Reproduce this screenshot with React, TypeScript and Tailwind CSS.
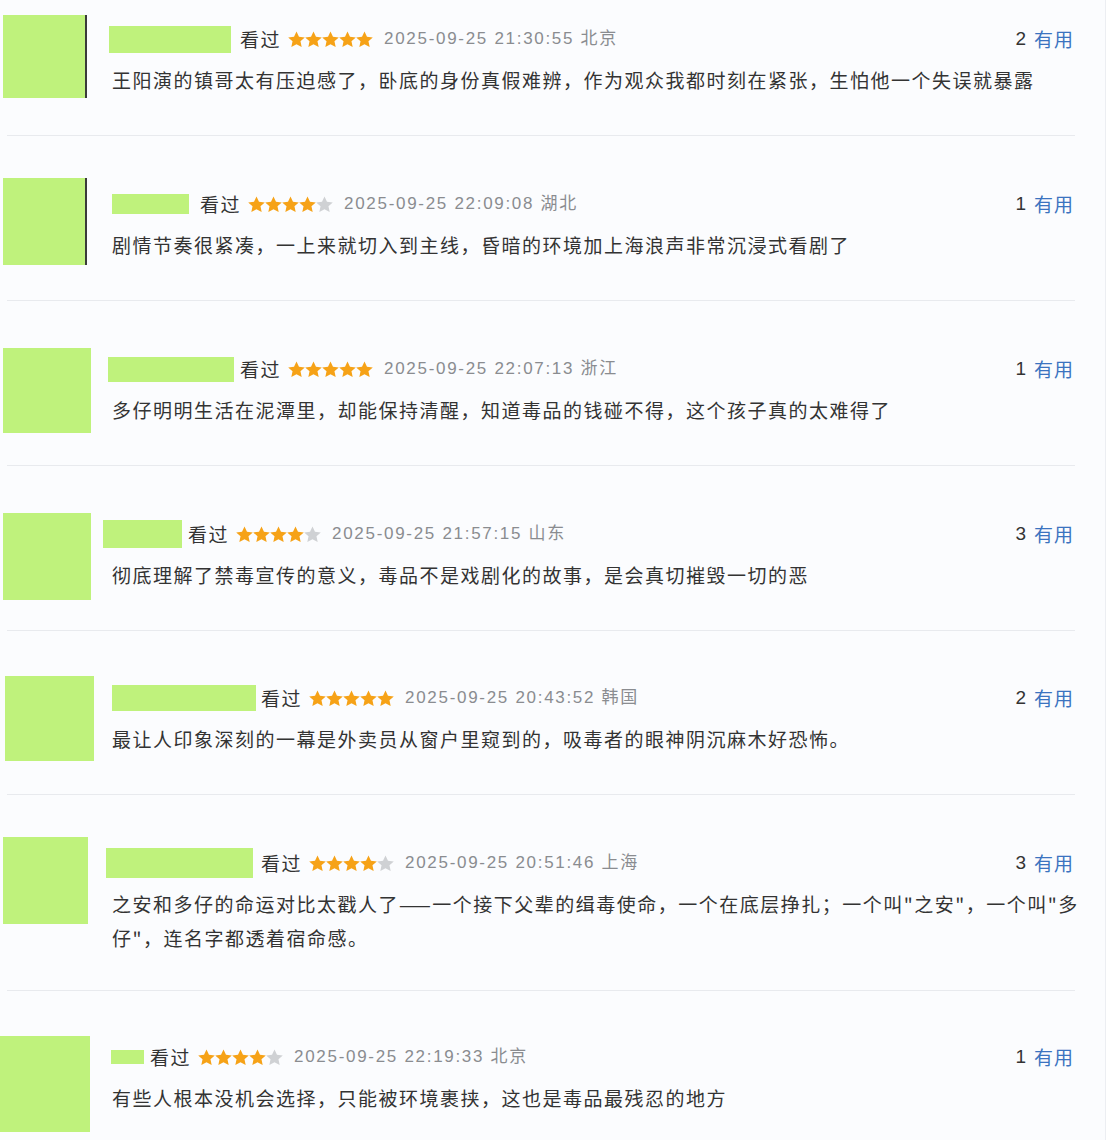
import React from "react";

type Row = {
  pt: string;
  pb: string;
  avatar: string;
  bar: string;
  kan: string;
  stars: number;
  time: string;
  loc: string;
  useful: number;
  lines: string[];
};

const rows: Row[] = [
  {
    pt: "pt-[25px]",
    pb: "pb-[38px]",
    avatar: "mt-[15px] ml-[3px] w-[84px] h-[83px] border-r-2 border-[#3a3a3a]",
    bar: "ml-[9px] w-[122px] h-[27px]",
    kan: "ml-[9px]",
    stars: 5,
    time: "2025-09-25 21:30:55",
    loc: "北京",
    useful: 2,
    lines: ["王阳演的镇哥太有压迫感了，卧底的身份真假难辨，作为观众我都时刻在紧张，生怕他一个失误就暴露"],
  },
  {
    pt: "pt-[54px]",
    pb: "pb-[38px]",
    avatar: "mt-[42px] ml-[3px] w-[84px] h-[87px] border-r-2 border-[#3a3a3a]",
    bar: "ml-[12px] w-[77px] h-[20px]",
    kan: "ml-[11px]",
    stars: 4,
    time: "2025-09-25 22:09:08",
    loc: "湖北",
    useful: 1,
    lines: ["剧情节奏很紧凑，一上来就切入到主线，昏暗的环境加上海浪声非常沉浸式看剧了"],
  },
  {
    pt: "pt-[54px]",
    pb: "pb-[38px]",
    avatar: "mt-[47px] ml-[3px] w-[88px] h-[85px]",
    bar: "ml-[8px] w-[126px] h-[25px]",
    kan: "ml-[6px]",
    stars: 5,
    time: "2025-09-25 22:07:13",
    loc: "浙江",
    useful: 1,
    lines: ["多仔明明生活在泥潭里，却能保持清醒，知道毒品的钱碰不得，这个孩子真的太难得了"],
  },
  {
    pt: "pt-[54px]",
    pb: "pb-[38px]",
    avatar: "mt-[47px] ml-[3px] w-[88px] h-[87px]",
    bar: "ml-[3px] w-[79px] h-[28px]",
    kan: "ml-[6px]",
    stars: 4,
    time: "2025-09-25 21:57:15",
    loc: "山东",
    useful: 3,
    lines: ["彻底理解了禁毒宣传的意义，毒品不是戏剧化的故事，是会真切摧毁一切的恶"],
  },
  {
    pt: "pt-[53px]",
    pb: "pb-[38px]",
    avatar: "mt-[45px] ml-[5px] w-[89px] h-[85px]",
    bar: "ml-[12px] w-[144px] h-[26px]",
    kan: "ml-[5px]",
    stars: 5,
    time: "2025-09-25 20:43:52",
    loc: "韩国",
    useful: 2,
    lines: ["最让人印象深刻的一幕是外卖员从窗户里窥到的，吸毒者的眼神阴沉麻木好恐怖。"],
  },
  {
    pt: "pt-[54px]",
    pb: "pb-[35px]",
    avatar: "mt-[42px] ml-[3px] w-[85px] h-[87px]",
    bar: "ml-[6px] w-[147px] h-[30px]",
    kan: "ml-[8px]",
    stars: 4,
    time: "2025-09-25 20:51:46",
    loc: "上海",
    useful: 3,
    lines: [
      "之安和多仔的命运对比太戳人了——一个接下父辈的缉毒使命，一个在底层挣扎；一个叫\"之安\"，一个叫\"多",
      "仔\"，连名字都透着宿命感。",
    ],
  },
  {
    pt: "pt-[52px]",
    pb: "pb-[20px]",
    avatar: "mt-[45px] ml-0 w-[90px] h-[96px]",
    bar: "ml-[11px] w-[33px] h-[14px]",
    kan: "ml-[6px]",
    stars: 4,
    time: "2025-09-25 22:19:33",
    loc: "北京",
    useful: 1,
    lines: ["有些人根本没机会选择，只能被环境裹挟，这也是毒品最残忍的地方"],
  },
];

const Star = ({ on }: { on: boolean }) => (
  <svg width="17" height="17" viewBox="0 0 24 24" className="shrink-0">
    <path
      d="M12 0.6l3.5 7.5 8.2.9-6.1 5.6 1.7 8.1L12 18.6l-7.3 4.1 1.7-8.1L.3 9l8.2-.9z"
      fill={on ? "#f6a217" : "#cfd1d4"}
    />
  </svg>
);

const cjk = { fontFamily: '"Noto Sans CJK SC", "Noto Sans", sans-serif' };
const mixed = { fontFamily: '"Liberation Sans", "Noto Sans CJK SC", sans-serif' };

export default function App() {
  return (
    <div className="w-[1106px] h-[1140px] overflow-hidden bg-[#fbfcfe] border-r border-[#eceef2]">
      {rows.map((r, i) => (
        <div key={i}>
          {i > 0 && <div className="ml-[7px] w-[1068px] h-px bg-[#e8eaee]" />}
          <div className="flex">
            <div className="w-[100px] shrink-0">
              <div className={`bg-[#bff27c] ${r.avatar}`} />
            </div>
            <div className={`flex-1 min-w-0 pr-[31px] ${r.pt} ${r.pb}`}>
              <div className="flex items-center h-[28px]">
                <div className={`bg-[#bff27c] shrink-0 ${r.bar}`} />
                <span
                  className={`text-[19px] tracking-[1.5px] text-[#333] leading-[28px] ${r.kan}`}
                  style={cjk}
                >
                  看过
                </span>
                <div className="flex ml-[7px]">
                  {[0, 1, 2, 3, 4].map((s) => (
                    <Star key={s} on={s < r.stars} />
                  ))}
                </div>
                <span
                  className="ml-[11px] text-[17px] tracking-[1.7px] text-[#8a8c90] leading-[28px] whitespace-nowrap"
                  style={mixed}
                >
                  {r.time} {r.loc}
                </span>
                <span className="ml-auto flex items-center leading-[28px] whitespace-nowrap">
                  <span className="text-[19px] text-[#333]" style={mixed}>
                    {r.useful}
                  </span>
                  <span
                    className="ml-[8px] text-[19px] tracking-[1px] text-[#3b73c0]"
                    style={cjk}
                  >
                    有用
                  </span>
                </span>
              </div>
              <div
                className="mt-[10px] pl-[12px] text-[19px] tracking-[1.5px] leading-[34px] text-[#333] whitespace-nowrap"
                style={cjk}
              >
                {r.lines.map((l, j) => (
                  <div key={j}>{l}</div>
                ))}
              </div>
            </div>
          </div>
        </div>
      ))}
    </div>
  );
}
